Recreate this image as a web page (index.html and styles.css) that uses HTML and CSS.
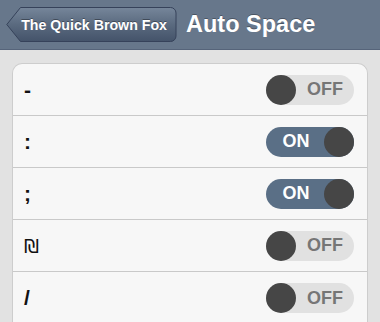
FILE: index.html
```html
<!DOCTYPE html>
<html lang="en">
<head>
  <meta charset="UTF-8">
  <meta name="viewport" content="width=device-width, initial-scale=1.0">
  <title>Auto Space</title>
  <link rel="stylesheet" href="styles.css">
</head>
<body>
  <div class="navbar">
    <div class="back-btn">
      <svg class="back-shape" width="171" height="35" viewBox="0 0 171 35">
        <defs>
          <linearGradient id="backGrad" x1="0" y1="0" x2="0" y2="1">
            <stop offset="0" stop-color="#76869a"/>
            <stop offset="0.5" stop-color="#5a6a7f"/>
            <stop offset="1" stop-color="#44536a"/>
          </linearGradient>
        </defs>
        <path d="M14.5 0.5 H164.5 A5.5 5.5 0 0 1 170 6 V29 A5.5 5.5 0 0 1 164.5 34.5 H14.5 L0.8 17.5 Z" fill="url(#backGrad)" stroke="#36425a" stroke-width="1"/>
      </svg>
      <span class="back-label">The Quick Brown Fox</span>
    </div>
    <h1 class="title">Auto Space</h1>
  </div>

  <div class="content">
    <div class="card">
      <div class="row">
        <span class="label">-</span>
        <div class="toggle off"><span class="knob"></span><span class="toggle-text">OFF</span></div>
      </div>
      <div class="row">
        <span class="label">:</span>
        <div class="toggle on"><span class="toggle-text">ON</span><span class="knob"></span></div>
      </div>
      <div class="row">
        <span class="label">;</span>
        <div class="toggle on"><span class="toggle-text">ON</span><span class="knob"></span></div>
      </div>
      <div class="row">
        <span class="label label-thin">&#8362;</span>
        <div class="toggle off"><span class="knob"></span><span class="toggle-text">OFF</span></div>
      </div>
      <div class="row">
        <span class="label">/</span>
        <div class="toggle off"><span class="knob"></span><span class="toggle-text">OFF</span></div>
      </div>
    </div>
  </div>
</body>
</html>
```

FILE: styles.css
```css
* {
  box-sizing: border-box;
}

body {
  margin: 0;
  background: #e2e2e2;
  font-family: 'Liberation Sans', 'DejaVu Sans', Arial, sans-serif;
  overflow: hidden;
}

/* top navigation bar */
.navbar {
  display: flex;
  align-items: center;
  height: 50px;
  padding-left: 6px;
  background: #67778b;
  border-bottom: 1px solid #56647a;
}

.back-btn {
  position: relative;
  width: 171px;
  height: 35px;
  display: flex;
  align-items: center;
  justify-content: flex-end;
  padding-right: 10px;
}

.back-shape {
  position: absolute;
  left: 0;
  top: 0;
}

.back-label {
  position: relative;
  color: #fff;
  font-size: 14.2px;
  font-weight: bold;
  text-shadow: 0 -1px 0 rgba(0, 0, 0, 0.35);
}

.title {
  margin: 0 0 0 9px;
  color: #fff;
  font-size: 23.5px;
  font-weight: bold;
  text-shadow: 0 -1px 0 rgba(0, 0, 0, 0.3);
}

/* settings list */
.content {
  padding: 13px 12px 0 12px;
}

.card {
  width: 356px;
  background: #f7f7f7;
  border: 1px solid #cdcdcd;
  border-bottom: none;
  border-radius: 10px 10px 0 0;
}

.row {
  display: flex;
  align-items: center;
  justify-content: space-between;
  height: 52px;
  padding: 0 13px 0 11px;
  border-bottom: 1px solid #c9c9c9;
}

.row:last-child {
  border-bottom: none;
}

.label {
  font-size: 21px;
  font-weight: bold;
  color: #111;
}

.label-thin {
  font-family: 'DejaVu Sans', sans-serif;
  font-weight: normal;
  font-size: 19px;
}

.toggle {
  display: flex;
  align-items: center;
  width: 88px;
  height: 30px;
  border-radius: 15px;
}

.toggle .knob {
  width: 30px;
  height: 30px;
  border-radius: 50%;
  background: #464646;
}

.toggle-text {
  flex: 1;
  text-align: center;
  font-size: 18px;
  font-weight: bold;
}

.toggle.off {
  background: #e1e1e1;
}

.toggle.off .toggle-text {
  color: #767676;
}

.toggle.on {
  background: #5a6f86;
}

.toggle.on .toggle-text {
  color: #fff;
  padding-left: 2px;
}
```
